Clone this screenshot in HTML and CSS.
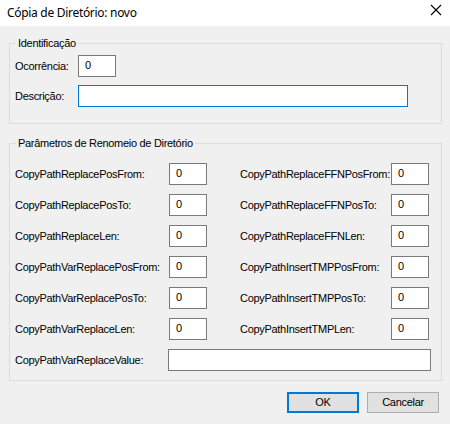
FILE: index.html
```html
<!DOCTYPE html>
<html>
<head>
<meta charset="utf-8">
<link rel="stylesheet" href="styles.css">
</head>
<body>
<div class="window">
  <div class="titlebar">
    <span class="title">Cópia de Diretório: novo</span>
    <svg class="close" width="12" height="12" viewBox="0 0 12 12"><path d="M1 1 L11 11 M11 1 L1 11" stroke="#000" stroke-width="1.1" fill="none"/></svg>
  </div>
  <fieldset class="group g1">
    <legend>Identificação</legend>
    <div class="row r1"><span class="lbl">Ocorrência:</span><div class="input small">0</div></div>
    <div class="row r2"><span class="lbl">Descrição:</span><div class="input wide focus"></div></div>
  </fieldset>
  <fieldset class="group g2">
    <legend>Parâmetros de Renomeio de Diretório</legend>
    <div class="grid">
      <span class="lbl">CopyPathReplacePosFrom:</span><div class="input">0</div><span></span>
      <span class="lbl">CopyPathReplaceFFNPosFrom:</span><div class="input">0</div>
      <span class="lbl">CopyPathReplacePosTo:</span><div class="input">0</div><span></span>
      <span class="lbl">CopyPathReplaceFFNPosTo:</span><div class="input">0</div>
      <span class="lbl">CopyPathReplaceLen:</span><div class="input">0</div><span></span>
      <span class="lbl">CopyPathReplaceFFNLen:</span><div class="input">0</div>
      <span class="lbl">CopyPathVarReplacePosFrom:</span><div class="input">0</div><span></span>
      <span class="lbl">CopyPathInsertTMPPosFrom:</span><div class="input">0</div>
      <span class="lbl">CopyPathVarReplacePosTo:</span><div class="input">0</div><span></span>
      <span class="lbl">CopyPathInsertTMPPosTo:</span><div class="input">0</div>
      <span class="lbl">CopyPathVarReplaceLen:</span><div class="input">0</div><span></span>
      <span class="lbl">CopyPathInsertTMPLen:</span><div class="input">0</div>
      <span class="lbl">CopyPathVarReplaceValue:</span><div class="input value"></div>
    </div>
  </fieldset>
  <div class="buttons">
    <div class="btn default">OK</div>
    <div class="btn">Cancelar</div>
  </div>
</div>
</body>
</html>
```
FILE: styles.css
```css
html, body {
  margin: 0;
  padding: 0;
}
body {
  width: 450px;
  height: 424px;
  background: #f0f0f0;
  overflow: hidden;
}
.window {
  width: 450px;
  height: 424px;
  background: #f0f0f0;
  font-family: "Liberation Sans", Arial, sans-serif;
  font-size: 11px;
  letter-spacing: -0.3px;
  color: #000;
}
.titlebar {
  height: 26px;
  background: #fff;
  display: flex;
  align-items: center;
  justify-content: space-between;
  padding: 0 8px 0 7px;
  box-sizing: border-box;
}
.title {
  font-family: "Noto Sans", "Open Sans", sans-serif;
  font-size: 12px;
  letter-spacing: -0.3px;
  line-height: 16px;
  margin-top: -1px;
}
.close {
  display: block;
  margin-top: -6px;
}
.group {
  margin: 0 0 0 9px;
  width: 433px;
  box-sizing: border-box;
  border: 1px solid #dcdcdc;
  padding: 0 5px;
  min-width: 0;
}
.group legend {
  font-size: 11px;
  line-height: 14px;
  padding: 0 2px;
  margin-left: 1px;
}
.g1 {
  margin-top: 10px;
  padding-top: 5px;
  padding-bottom: 16px;
}
.g2 {
  margin-top: 12px;
  padding-top: 13px;
  padding-bottom: 9px;
}
.row {
  display: flex;
  align-items: center;
  height: 22px;
}
.r2 {
  margin-top: 8px;
}
.row .lbl {
  width: 63px;
}
.lbl {
  font-size: 11px;
  line-height: 13px;
  white-space: nowrap;
}
.input {
  box-sizing: border-box;
  height: 22px;
  width: 38px;
  background: #fff;
  border: 1px solid #7a7a7a;
  font-size: 11px;
  line-height: 16px;
  padding: 1px 0 0 6px;
}
.small {
  width: 38px;
}
.wide {
  width: 330px;
}
.focus {
  border-color: #0078d7;
}
.grid {
  display: grid;
  grid-template-columns: 154px 38px 33px 151px 38px;
  grid-auto-rows: 22px;
  row-gap: 9px;
  align-items: center;
}
.grid .input {
  height: 22px;
}
.value {
  grid-column: 2 / 6;
  width: auto;
  margin-left: -1px;
  margin-right: -2px;
}
.buttons {
  display: flex;
  justify-content: flex-end;
  gap: 8px;
  margin: 11px 11px 0 0;
}
.btn {
  box-sizing: border-box;
  width: 72px;
  height: 21px;
  background: #e1e1e1;
  border: 1px solid #adadad;
  font-size: 11px;
  line-height: 19px;
  text-align: center;
}
.btn.default {
  border: 2px solid #0078d7;
  line-height: 17px;
}
```
